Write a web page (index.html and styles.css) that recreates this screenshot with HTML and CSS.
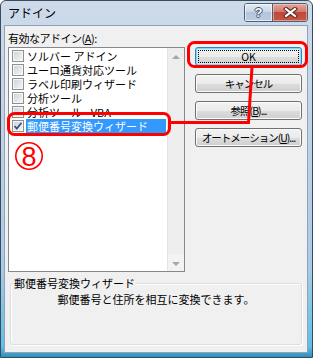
FILE: index.html
```html
<!DOCTYPE html>
<html lang="ja">
<head>
<meta charset="utf-8">
<title>アドイン</title>
<link rel="stylesheet" href="styles.css">
</head>
<body>
<div class="window">
  <div class="titlebar">
    <span class="title">アドイン</span>
    <div class="caption-buttons">
      <span class="cap-btn help">?</span>
      <span class="cap-btn close">
        <svg width="15" height="11" viewBox="0 0 15 11">
          <path d="M3 2 L12 9 M12 2 L3 9" stroke="#5b2a24" stroke-width="4.2" stroke-linecap="square" fill="none"/>
          <path d="M3 2 L12 9 M12 2 L3 9" stroke="#ffffff" stroke-width="2.2" stroke-linecap="square" fill="none"/>
        </svg>
      </span>
    </div>
  </div>
  <div class="client">
    <div class="main">
      <div class="left">
        <div class="label">有効なアドイン(<u>A</u>):</div>
        <div class="listbox">
          <ul class="items">
            <li class="item"><span class="check"></span><span class="text">ソルバー アドイン</span></li>
            <li class="item"><span class="check"></span><span class="text">ユーロ通貨対応ツール</span></li>
            <li class="item"><span class="check"></span><span class="text">ラベル印刷ウィザード</span></li>
            <li class="item"><span class="check"></span><span class="text">分析ツール</span></li>
            <li class="item"><span class="check"></span><span class="text">分析ツール - VBA</span></li>
            <li class="item selected"><span class="check checked"><svg width="10" height="10" viewBox="0 0 10 10"><path d="M1.5 5 L3.8 7.6 L8.5 1.8" stroke="#3a4f86" stroke-width="1.7" fill="none"/></svg></span><span class="text">郵便番号変換ウィザード</span></li>
          </ul>
          <div class="scrollbar">
            <span class="sb-btn"><span class="arrow up"></span></span>
            <span class="sb-btn"><span class="arrow down"></span></span>
          </div>
        </div>
      </div>
      <div class="buttons">
        <div class="btn default">OK</div>
        <div class="btn">キャンセル</div>
        <div class="btn">参照(<u>B</u>)...</div>
        <div class="btn">オートメーション(<u>U</u>)...</div>
      </div>
    </div>
    <fieldset class="group">
      <legend>郵便番号変換ウィザード</legend>
      <p class="desc">郵便番号と住所を相互に変換できます。</p>
    </fieldset>
  </div>
</div>
<svg class="annotations" width="313" height="358" viewBox="0 0 313 358">
  <rect x="188.5" y="42.5" width="118" height="24" rx="6" ry="6" fill="none" stroke="#ff0000" stroke-width="3"/>
  <rect x="8.5" y="113.5" width="161" height="21" rx="6" ry="6" fill="none" stroke="#ff0000" stroke-width="3"/>
  <polyline points="170,122.5 248.5,122.5 252,67" fill="none" stroke="#ff0000" stroke-width="3"/>
  <circle cx="29" cy="156" r="13.2" fill="none" stroke="#ff0000" stroke-width="1.6"/>
  <text x="29" y="166" text-anchor="middle" class="num">8</text>
</svg>
</body>
</html>
```
FILE: styles.css
```css
* {
  box-sizing: border-box;
}

html, body {
  margin: 0;
  padding: 0;
}

body {
  position: relative;
  width: 313px;
  height: 358px;
  overflow: hidden;
  background: #ffffff;
  font-family: "Noto Sans CJK JP", "Liberation Sans", sans-serif;
  font-size: 11px;
  color: #000;
}

.window {
  width: 313px;
  height: 358px;
  border: 1px solid #3b4a5c;
  border-radius: 6px 6px 0 0;
  background: linear-gradient(to bottom, #cddaea 0%, #c2d2e5 35%, #a9cbe6 75%, #5fc0e6 97%, #2e8fc0 100%);
  display: flex;
  flex-direction: column;
  padding: 0 4px 4px 3px;
}

.titlebar {
  height: 24px;
  flex: none;
  display: flex;
  justify-content: space-between;
  align-items: flex-start;
  padding-left: 4px;
}

.title {
  font-size: 12px;
  line-height: 14px;
  margin-top: 5px;
  color: #000;
}

.caption-buttons {
  display: flex;
  margin-top: 2px;
  border: 1px solid #4d5f76;
  border-radius: 3px;
  overflow: hidden;
  height: 19px;
}

.cap-btn {
  display: flex;
  align-items: center;
  justify-content: center;
  height: 100%;
}

.help {
  width: 28px;
  background: linear-gradient(to bottom, #e3ebf4 0%, #c9d7e7 45%, #b2c5db 50%, #bccde0 100%);
  border-right: 1px solid #4d5f76;
  font-family: "Liberation Sans", sans-serif;
  font-weight: bold;
  font-size: 13px;
  color: #ffffff;
  text-shadow: 1px 0 0 #3d4f66, -1px 0 0 #3d4f66, 0 1px 0 #3d4f66, 0 -1px 0 #3d4f66;
  box-shadow: inset 0 0 0 1px rgba(255, 255, 255, 0.6);
}

.close {
  width: 34px;
  background: linear-gradient(to bottom, #e6a69c 0%, #d4796c 45%, #c0473a 50%, #c9563f 100%);
  box-shadow: inset 0 0 0 1px rgba(255, 220, 210, 0.5);
}

.close svg {
  display: block;
}

.client {
  flex: 1;
  background: #f0f0f0;
  border: 1px solid #8ea3ba;
  padding: 6px 5px 0 3px;
  display: flex;
  flex-direction: column;
}

.main {
  display: flex;
  gap: 10px;
  flex: none;
}

.left {
  width: 177px;
  display: flex;
  flex-direction: column;
}

.label {
  line-height: 13px;
  margin-bottom: 2px;
  letter-spacing: -0.5px;
}

.listbox {
  height: 225px;
  border: 1px solid #828790;
  background: #ffffff;
  display: flex;
}

.items {
  list-style: none;
  margin: 0;
  padding: 1px 1px 0 0;
  flex: 1;
}

.item {
  display: flex;
  align-items: center;
  height: 14px;
}

.check {
  width: 12px;
  height: 12px;
  margin-left: 3px;
  margin-right: 2px;
  border: 1px solid #8e8f8f;
  background: linear-gradient(135deg, #cdd1d6 0%, #e6e8ea 60%, #f6f6f6 100%);
  box-shadow: inset 0 0 0 1px #f7f7f7;
  display: flex;
  align-items: center;
  justify-content: center;
  flex: none;
}

.check svg {
  display: block;
}

.text {
  flex: 1;
  line-height: 14px;
  padding-left: 1px;
  white-space: nowrap;
}

.selected .text {
  background: #3399ff;
  color: #ffffff;
}

.scrollbar {
  width: 17px;
  flex: none;
  background: #eeeeee;
  border-left: 1px solid #e4e4e4;
  display: flex;
  flex-direction: column;
  justify-content: space-between;
}

.sb-btn {
  height: 17px;
  display: flex;
  align-items: center;
  justify-content: center;
}

.sb-btn:last-child {
  padding-top: 2px;
  background: #f3f3f3;
}

.arrow {
  width: 0;
  height: 0;
  border-left: 4px solid transparent;
  border-right: 4px solid transparent;
}

.arrow.up {
  border-bottom: 4px solid #a6a6a6;
}

.arrow.down {
  border-top: 4px solid #a6a6a6;
}

.buttons {
  width: 107px;
  padding-top: 15px;
  display: flex;
  flex-direction: column;
  gap: 8px;
}

.btn {
  height: 19px;
  border: 1px solid #707070;
  border-radius: 3px;
  background: linear-gradient(to bottom, #f2f2f2 0%, #ebebeb 50%, #dddddd 52%, #cfcfcf 100%);
  box-shadow: inset 0 0 0 1px #fbfbfb;
  display: flex;
  align-items: center;
  justify-content: center;
  font-size: 10.5px;
  letter-spacing: -1px;
  line-height: 13px;
  white-space: nowrap;
}

.btn.default {
  border-color: #3c7fb1;
  box-shadow: inset 0 0 0 1px #7fdcf8, inset 0 0 0 2px #c9eefb;
  outline: 1px dotted #000;
  outline-offset: -4px;
  letter-spacing: 0;
}

.group {
  flex: 1;
  margin: 5px 0 7px 2px;
  padding: 0 2px;
  border: 1px solid #d5dfe5;
  border-radius: 3px;
  box-shadow: inset 1px 1px 0 #ffffff, 1px 1px 0 #ffffff;
  min-width: 0;
}

.group legend {
  padding: 0 1px;
  line-height: 13px;
  background: #f0f0f0;
}

.desc {
  margin: 0;
  padding-top: 3px;
  line-height: 13px;
  text-align: center;
}

.annotations {
  position: absolute;
  left: 0;
  top: 0;
  pointer-events: none;
}

.num {
  font-family: "Liberation Sans", sans-serif;
  font-size: 27px;
  fill: #ff0000;
}
```
